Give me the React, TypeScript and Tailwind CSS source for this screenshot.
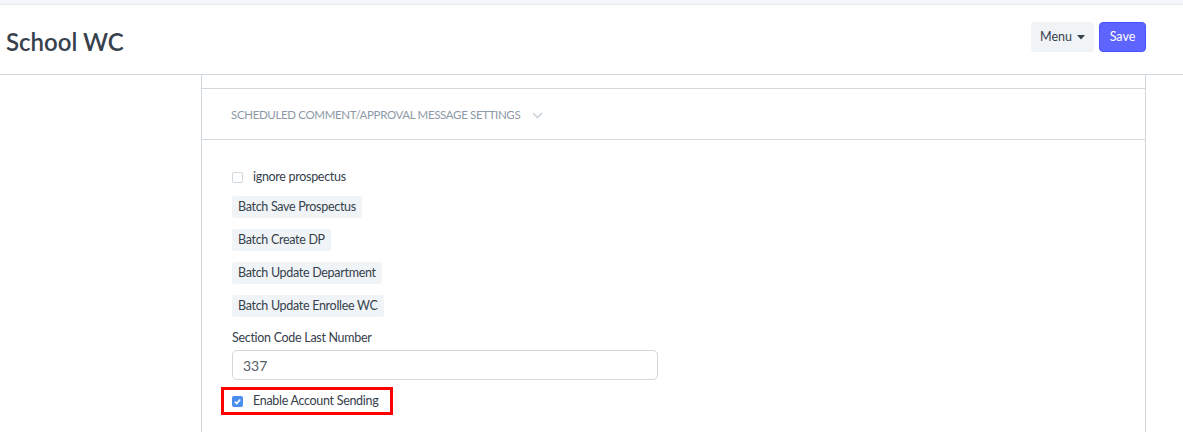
import React from 'react';

const font = { fontFamily: 'Lato, "Noto Sans", sans-serif' };

const ActionButton: React.FC<{ label: string }> = ({ label }) => (
  <div className="flex">
    <button className="h-[22px] px-[6px] rounded-[3px] bg-[#f0f4f7] text-[12.5px] tracking-[-0.3px] leading-[22px] text-[#36414c] whitespace-nowrap">
      {label}
    </button>
  </div>
);

const Checkbox: React.FC<{ checked?: boolean }> = ({ checked }) =>
  checked ? (
    <span className="w-[11px] h-[11px] shrink-0 rounded-[2px] bg-[#4a8ff0] flex items-center justify-center">
      <svg width="9" height="9" viewBox="0 0 10 10">
        <polyline points="2,5.2 4.2,7.3 8,2.8" fill="none" stroke="white" strokeWidth="1.8" />
      </svg>
    </span>
  ) : (
    <span className="w-[11px] h-[11px] shrink-0 rounded-[2px] border border-[#d1d8dd] bg-white" />
  );

export default function App() {
  const batchButtons = [
    'Batch Save Prospectus',
    'Batch Create DP',
    'Batch Update Department',
    'Batch Update Enrollee WC',
  ];

  return (
    <div className="w-[1183px] h-[432px] bg-white overflow-hidden" style={font}>
      {/* top strip */}
      <div className="h-[5px] bg-[#f5f6fa] border-b border-[#e8ebf0]" />

      {/* page head */}
      <div className="h-[70px] flex justify-between border-b border-[#d1d8dd]">
        <h1 className="pl-[6px] pt-[21px] text-[24px] leading-[32px] font-semibold text-[#36414c]">
          School WC
        </h1>
        <div className="flex gap-[5px] pt-[17px] pr-[37px]">
          <button className="h-[30px] w-[63px] rounded-[4px] bg-[#f0f4f7] text-[12.5px] text-[#36414c] flex items-center justify-center gap-[5px]">
            Menu
            <svg width="8" height="5" viewBox="0 0 8 5">
              <polygon points="0,0 8,0 4,4.5" fill="#36414c" />
            </svg>
          </button>
          <button className="h-[30px] w-[47px] rounded-[4px] bg-[#5e64ff] border border-[#4a52ff] text-[12.5px] text-white">
            Save
          </button>
        </div>
      </div>

      {/* body */}
      <div className="flex">
        <div className="w-[201px] shrink-0" />
        <div className="w-[945px] h-[358px] border-l border-r border-[#d1d8dd]">
          <div className="h-[14px] border-b border-[#d1d8dd]" />
          <div className="h-[51px] border-b border-[#d1d8dd] pl-[29px] pt-[2px] flex items-center gap-[12px]">
            <span className="text-[11.5px] tracking-[-0.35px] text-[#8d99a6] uppercase whitespace-nowrap">
              Scheduled Comment/Approval Message Settings
            </span>
            <svg width="11" height="7" viewBox="0 0 11 7">
              <polyline points="1,1 5.5,5.5 10,1" fill="none" stroke="#c8d0d8" strokeWidth="1.6" />
            </svg>
          </div>

          <div className="pl-[30px] pt-[30px] text-[#36414c]">
            <label className="flex items-center gap-[10px] h-[14px] text-[12.5px] tracking-[-0.3px]">
              <Checkbox />
              ignore prospectus
            </label>

            <div className="mt-[12px] flex flex-col gap-[11px]">
              {batchButtons.map((b) => (
                <ActionButton key={b} label={b} />
              ))}
            </div>

            <div className="mt-[13px] text-[12.5px] tracking-[-0.3px] leading-[16px]">Section Code Last Number</div>
            <div className="mt-[4px] w-[426px] h-[30px] rounded-[5px] border border-[#d1d8dd] pl-[10px] flex items-center text-[14px] text-[#555d66]">
              337
            </div>

            <div className="mt-[7px] -ml-[11px] w-[172px] h-[28px] border-[3px] border-[#ff0000] pl-[8px] flex items-center gap-[10px] text-[12.5px] tracking-[-0.3px] whitespace-nowrap">
              <Checkbox checked />
              Enable Account Sending
            </div>
          </div>
        </div>
      </div>
    </div>
  );
}
